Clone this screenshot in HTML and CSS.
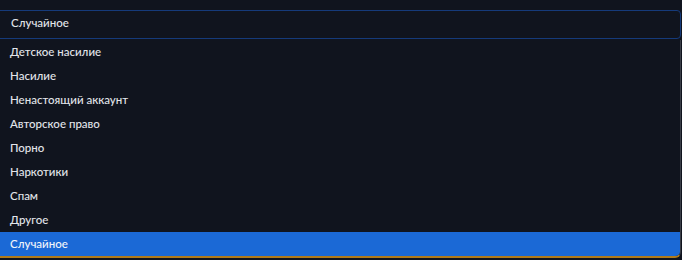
FILE: index.html
```html
<!DOCTYPE html>
<html lang="ru">
<head>
  <meta charset="UTF-8" />
  <title>Жалоба</title>
  <link rel="stylesheet" href="styles.css">
</head>
<body>
  <div class="report">
    <div class="select-box">Случайное</div>
    <ul class="options">
      <li class="option">Детское насилие</li>
      <li class="option">Насилие</li>
      <li class="option">Ненастоящий аккаунт</li>
      <li class="option">Авторское право</li>
      <li class="option">Порно</li>
      <li class="option">Наркотики</li>
      <li class="option">Спам</li>
      <li class="option">Другое</li>
      <li class="option selected">Случайное</li>
    </ul>
  </div>
</body>
</html>
```

FILE: styles.css
```css
body {
  margin: 0;
  background: #10141e;
  font-family: Lato, "Open Sans", sans-serif;
  font-size: 11.5px;
  font-weight: 500;
  color: #e2e5ea;
  overflow: hidden;
}

.report {
  padding-top: 10px;
  margin-left: -4px;
  width: 685px;
}

.select-box {
  height: 24px;
  line-height: 24px;
  padding: 0 0 3px 14px;
  border: 1px solid #153a7a;
  border-radius: 4px;
}

.options {
  list-style: none;
  margin: 1px 0 0;
  padding: 0;
  border-right: 1px solid #3a3e48;
  border-bottom: 2px solid #b07b1c;
  border-bottom-right-radius: 6px;
  overflow: hidden;
}

.option {
  height: 24px;
  line-height: 24px;
  padding-left: 14px;
}

.option.selected {
  background: #1b69d6;
  color: #f2f5fa;
}
```
